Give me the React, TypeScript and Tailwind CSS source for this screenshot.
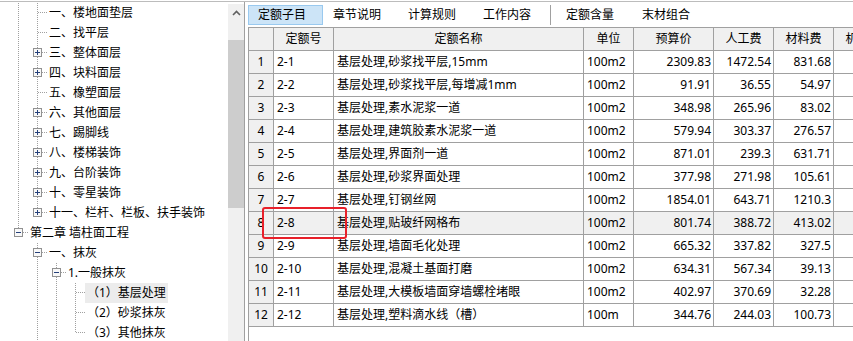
import React from 'react';

type Box = 'plus' | 'minus' | undefined;

interface TreeRow {
  level: number;
  label: string;
  box?: Box;
  guides: boolean[];
  last?: boolean;
  selected?: boolean;
}

const LINE = '#a0a0a0';

const tree: TreeRow[] = [
  { level: 2, label: '一、楼地面垫层', guides: [true] },
  { level: 2, label: '二、找平层', guides: [true] },
  { level: 2, label: '三、整体面层', box: 'plus', guides: [true] },
  { level: 2, label: '四、块料面层', box: 'plus', guides: [true] },
  { level: 2, label: '五、橡塑面层', guides: [true] },
  { level: 2, label: '六、其他面层', box: 'plus', guides: [true] },
  { level: 2, label: '七、踢脚线', box: 'plus', guides: [true] },
  { level: 2, label: '八、楼梯装饰', box: 'plus', guides: [true] },
  { level: 2, label: '九、台阶装饰', box: 'plus', guides: [true] },
  { level: 2, label: '十、零星装饰', box: 'plus', guides: [true] },
  { level: 2, label: '十一、栏杆、栏板、扶手装饰', box: 'plus', guides: [true], last: true },
  { level: 1, label: '第二章 墙柱面工程', box: 'minus', guides: [], last: true },
  { level: 2, label: '一、抹灰', box: 'minus', guides: [false] },
  { level: 3, label: '1.一般抹灰', box: 'minus', guides: [false, true] },
  { level: 4, label: '（1）基层处理', guides: [false, true, true], selected: true },
  { level: 4, label: '（2）砂浆抹灰', guides: [false, true, true] },
  { level: 4, label: '（3）其他抹灰', guides: [false, true, true], last: true },
];

const rows = [
  ['1', '2-1', '基层处理,砂浆找平层,15mm', '100m2', '2309.83', '1472.54', '831.68'],
  ['2', '2-2', '基层处理,砂浆找平层,每增减1mm', '100m2', '91.91', '36.55', '54.97'],
  ['3', '2-3', '基层处理,素水泥浆一道', '100m2', '348.98', '265.96', '83.02'],
  ['4', '2-4', '基层处理,建筑胶素水泥浆一道', '100m2', '579.94', '303.37', '276.57'],
  ['5', '2-5', '基层处理,界面剂一道', '100m2', '871.01', '239.3', '631.71'],
  ['6', '2-6', '基层处理,砂浆界面处理', '100m2', '377.98', '271.98', '105.61'],
  ['7', '2-7', '基层处理,钉钢丝网', '100m2', '1854.01', '643.71', '1210.3'],
  ['8', '2-8', '基层处理,贴玻纤网格布', '100m2', '801.74', '388.72', '413.02'],
  ['9', '2-9', '基层处理,墙面毛化处理', '100m2', '665.32', '337.82', '327.5'],
  ['10', '2-10', '基层处理,混凝土基面打磨', '100m2', '634.31', '567.34', '39.13'],
  ['11', '2-11', '基层处理,大模板墙面穿墙螺栓堵眼', '100m2', '402.97', '370.69', '32.28'],
  ['12', '2-12', '基层处理,塑料滴水线（槽）', '100m', '344.76', '244.03', '100.73'],
];

const Guide: React.FC<{ on: boolean }> = ({ on }) => (
  <svg width="19" height="20" className="shrink-0">
    {on && <line x1="9.5" y1="0" x2="9.5" y2="20" stroke={LINE} strokeDasharray="1 1" />}
  </svg>
);

const Connector: React.FC<{ box?: Box; last?: boolean }> = ({ box, last }) => (
  <svg width="19" height="20" className="shrink-0">
    <line x1="9.5" y1="0" x2="9.5" y2={last ? 10 : 20} stroke={LINE} strokeDasharray="1 1" />
    <line x1="10" y1="9.5" x2="19" y2="9.5" stroke={LINE} strokeDasharray="1 1" />
    {box && (
      <g>
        <rect x="5.5" y="5.5" width="8" height="8" fill="#f8f8f8" stroke="#919191" />
        <line x1="7" y1="9.5" x2="12" y2="9.5" stroke="#25407a" />
        {box === 'plus' && <line x1="9.5" y1="7" x2="9.5" y2="12" stroke="#25407a" />}
      </g>
    )}
  </svg>
);

const TreePanel: React.FC = () => (
  <div className="flex w-[245px] shrink-0 border-r border-[#a0a0a0]">
    <div className="flex-1 overflow-hidden pl-[9px] pt-px">
      {tree.map((r, i) => (
        <div key={i} className="flex h-5 items-center">
          {r.guides.map((g, j) => (
            <Guide key={j} on={g} />
          ))}
          <Connector box={r.box} last={r.last} />
          <span
            className={`whitespace-nowrap px-[2px] leading-5 text-black ${r.selected ? 'bg-[#ececec]' : ''}`}
          >
            {r.label}
          </span>
        </div>
      ))}
    </div>
    <div className="mt-[2px] flex w-4 shrink-0 flex-col bg-[#f0f0f0]">
      <div className="flex h-[17px] items-center justify-center">
        <svg width="9" height="6" viewBox="0 0 9 6">
          <path d="M1 5 L4.5 1.5 L8 5" fill="none" stroke="#606060" strokeWidth="1.6" />
        </svg>
      </div>
      <div className="mt-[19px] h-[168px] bg-[#cdcdcd]" />
    </div>
  </div>
);

const Tabs: React.FC = () => (
  <div className="flex h-[25px] shrink-0 items-start pt-[3px] text-black">
    <div className="h-5 w-[75px] border border-[#99c9ef] bg-[#cce4f7] pl-[9px] leading-[18px]">定额子目</div>
    <div className="h-5 w-[75px] pl-[10px] leading-5">章节说明</div>
    <div className="h-5 w-[75px] pl-[10px] leading-5">计算规则</div>
    <div className="h-5 w-[75px] pl-[10px] leading-5">工作内容</div>
    <div className="ml-[2px] h-5 w-px bg-[#a0a0a0]" />
    <div className="ml-[5px] h-5 w-[76px] pl-[10px] leading-5">定额含量</div>
    <div className="h-5 w-[76px] pl-[10px] leading-5">末材组合</div>
  </div>
);

const Grid: React.FC = () => (
  <div className="flex-1 overflow-hidden border-l border-t border-[#a0a0a0] bg-white text-black">
    <div className="flex h-[23px] border-b border-[#a0a0a0] bg-[#f0f0f0] leading-[22px]">
      <div className="w-[25px] shrink-0 border-r border-[#a0a0a0]" />
      <div className="w-[60px] shrink-0 border-r border-[#a0a0a0] text-center">定额号</div>
      <div className="w-[250px] shrink-0 border-r border-[#a0a0a0] text-center">定额名称</div>
      <div className="w-[50px] shrink-0 border-r border-[#a0a0a0] text-center">单位</div>
      <div className="w-[80px] shrink-0 border-r border-[#a0a0a0] text-center">预算价</div>
      <div className="w-[60px] shrink-0 border-r border-[#a0a0a0] text-center">人工费</div>
      <div className="w-[60px] shrink-0 border-r border-[#a0a0a0] text-center">材料费</div>
      <div className="w-[60px] shrink-0 whitespace-nowrap border-r border-[#a0a0a0] text-center">机械费</div>
    </div>
    {rows.map((r) => {
      const sel = r[0] === '8';
      return (
        <div
          key={r[0]}
          className={`flex h-[23px] border-b border-[#a0a0a0] leading-[22px] ${sel ? 'bg-[#f0f0f0]' : ''}`}
        >
          <div className="w-[25px] shrink-0 border-r border-[#a0a0a0] bg-[#f0f0f0] text-center">{r[0]}</div>
          <div className="w-[60px] shrink-0 border-r border-[#a0a0a0] pl-[3px]">{r[1]}</div>
          <div className="w-[250px] shrink-0 whitespace-nowrap border-r border-[#a0a0a0] pl-[3px]">{r[2]}</div>
          <div className="w-[50px] shrink-0 border-r border-[#a0a0a0] pl-[3px]">{r[3]}</div>
          <div className="w-[80px] shrink-0 border-r border-[#a0a0a0] pr-[2px] text-right">{r[4]}</div>
          <div className="w-[60px] shrink-0 border-r border-[#a0a0a0] pr-[2px] text-right">{r[5]}</div>
          <div className="w-[60px] shrink-0 border-r border-[#a0a0a0] pr-[2px] text-right">{r[6]}</div>
          <div className="w-[60px] shrink-0 border-r border-[#a0a0a0]" />
        </div>
      );
    })}
  </div>
);

export default function App() {
  return (
    <div className="relative flex h-[341px] w-[853px] flex-col overflow-hidden bg-white font-['Noto_Sans','Noto_Sans_CJK_SC',sans-serif] text-[12px]">
      <div className="h-px shrink-0 bg-white" />
      <div className="flex min-h-0 flex-1 border-t border-[#bcbcbc]">
        <TreePanel />
        <div className="w-[3px] shrink-0 bg-white" />
        <div className="flex min-w-0 flex-1 flex-col">
          <Tabs />
          <Grid />
        </div>
      </div>
      <div className="absolute left-[262px] top-[207px] h-[32px] w-[85px] rounded-[3px] border-2 border-[#e8202a]" />
    </div>
  );
}
